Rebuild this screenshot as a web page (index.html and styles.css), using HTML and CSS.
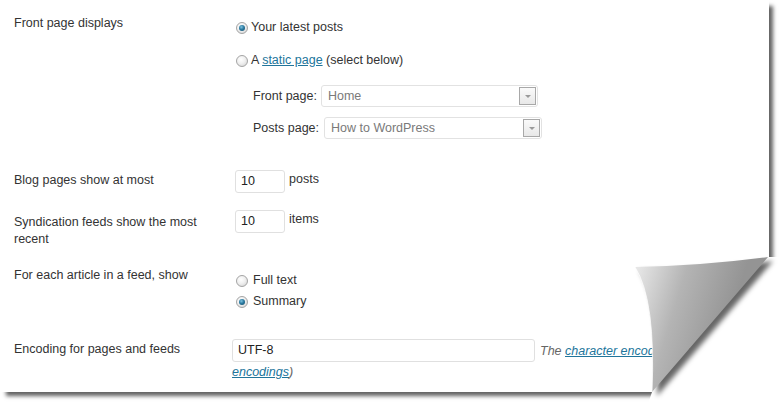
FILE: index.html
```html
<!DOCTYPE html>
<html>
<head>
<meta charset="utf-8">
<link rel="stylesheet" href="styles.css">
</head>
<body>
<div class="sheet">
  <div class="page">
    <div class="row row-front">
      <div class="label">Front page displays</div>
      <div class="field">
        <div class="radio-line first"><span class="radio checked"></span><span class="opt">Your latest posts</span></div>
        <div class="radio-line second"><span class="radio"></span><span class="opt">A <a href="#">static page</a> (select below)</span></div>
        <div class="select-row sel1"><span class="sel-label">Front page:</span><span class="select w1">Home<span class="arrow"></span></span></div>
        <div class="select-row sel2"><span class="sel-label">Posts page:</span><span class="select w2">How to WordPress<span class="arrow"></span></span></div>
      </div>
    </div>
    <div class="row row-blog">
      <div class="label">Blog pages show at most</div>
      <div class="field inline"><span class="input small">10</span><span class="unit">posts</span></div>
    </div>
    <div class="row row-feed">
      <div class="label">Syndication feeds show the most recent</div>
      <div class="field inline"><span class="input small">10</span><span class="unit">items</span></div>
    </div>
    <div class="row row-article">
      <div class="label">For each article in a feed, show</div>
      <div class="field">
        <div class="radio-line r1"><span class="radio"></span><span class="opt">Full text</span></div>
        <div class="radio-line r2"><span class="radio checked"></span><span class="opt">Summary</span></div>
      </div>
    </div>
    <div class="row row-enc">
      <div class="label">Encoding for pages and feeds</div>
      <div class="field enc">
        <div class="enc-line"><span class="input wide">UTF-8</span><span class="desc">The <a href="#">character encoding</a> of your site (</span></div>
        <div class="desc desc2"><a href="#">encodings</a>)</div>
      </div>
    </div>
  </div>
  <svg class="curl" width="184" height="167" viewBox="600 240 184 167">
    <defs>
      <filter id="blur" x="-30%" y="-30%" width="160%" height="160%">
        <feGaussianBlur stdDeviation="2.4"/>
      </filter>
      <linearGradient id="flapg" gradientUnits="userSpaceOnUse" x1="636" y1="275" x2="735" y2="305">
        <stop offset="0" stop-color="#e6e6e6"/>
        <stop offset="0.45" stop-color="#b4b4b4"/>
        <stop offset="1" stop-color="#949494"/>
      </linearGradient>
    </defs>
    <path d="M768,257 L790,257 L790,410 L646,410 L652,392 Z" fill="#ffffff"/>
    <path d="M635,267 Q700,266 768,257 L652,392 Q656,300 635,267 Z" fill="rgba(0,0,0,0.6)" filter="url(#blur)" transform="translate(5,4)"/>
    <path d="M635,267 Q700,266 768,257 L652,392 Q656,300 635,267 Z" fill="url(#flapg)"/>
    <path d="M635,267 Q656,300 652,392" fill="none" stroke="rgba(255,255,255,0.7)" stroke-width="1"/>
  </svg>
</div>
</body>
</html>
```
FILE: styles.css
```css
* { box-sizing: border-box; }
html, body { margin: 0; padding: 0; background: #fff; }
body {
  font-family: "Liberation Sans", Arial, sans-serif;
  font-size: 12.5px;
  color: #333;
}
.sheet { position: relative; width: 784px; height: 407px; overflow: hidden; }
.page {
  width: 769px;
  height: 392px;
  background: #fff;
  box-shadow: 5px 5px 4px -1px rgba(0,0,0,0.62);
  overflow: hidden;
}
a { color: #21759b; text-decoration: underline; }

.row { display: flex; align-items: flex-start; }
.label { width: 235px; padding-left: 14px; line-height: 17px; flex: none; }
.field { flex: 1; }
.field.inline { display: flex; align-items: flex-start; }

.row-front { padding-top: 14px; }
.row-front .label { margin-top: 1px; }
.radio-line { height: 17px; line-height: 17px; display: flex; align-items: center; white-space: nowrap; }
.radio-line.first { margin-top: 5px; }
.radio-line.second { margin-top: 16px; }
.radio {
  width: 12px; height: 12px; border-radius: 50%;
  margin-left: 1px; margin-right: 3px;
  border: 1px solid #a4a4a4;
  background: radial-gradient(circle at 40% 35%, #ffffff 0%, #f0f0f0 45%, #cfcfcf 100%);
  flex: none;
  position: relative;
}
.radio.checked::after {
  content: "";
  position: absolute; left: 2px; top: 2px; width: 6px; height: 6px; border-radius: 50%;
  background: radial-gradient(circle at 40% 35%, #7fc3e0 0%, #2b7aa0 45%, #154a66 100%);
}
.r1 .radio, .r2 .radio { margin-right: 5px; }
.select-row { display: flex; align-items: center; height: 22px; padding-left: 18px; }
.sel1 { margin-top: 16px; }
.sel2 { margin-top: 10px; }
.sel-label { margin-right: 5px; }
.sel1 .sel-label { margin-right: 4px; }
.select {
  position: relative; height: 22px; line-height: 20px;
  border: 1px solid #e2e2e2; border-radius: 3px; background: #fff;
  color: #7a7a7a; padding-left: 6px;
}
.w1 { width: 217px; }
.w2 { width: 218px; }
.arrow {
  position: absolute; right: 1px; top: 1px; width: 17px; height: 18px;
  border: 1px solid #a8a8a8;
  background: linear-gradient(#fafafa, #e8e8e8);
}
.arrow::after {
  content: ""; position: absolute; left: 5px; top: 7px;
  border-left: 3px solid transparent; border-right: 3px solid transparent;
  border-top: 3px solid #9a9a9a;
}

.input {
  display: inline-block; height: 23px; line-height: 21px;
  border: 1px solid #e0e0e0; border-radius: 3px; background: #fff;
  color: #222; padding-left: 5px;
}
.input.small { width: 50px; }
.unit { margin-left: 4px; line-height: 17px; margin-top: 1px; }

.row-blog { margin-top: 31px; }
.row-blog .label { margin-top: 2px; }
.row-feed { margin-top: 17px; }
.row-feed .label { margin-top: 4px; padding-right: 30px; }
.row-article { margin-top: 16px; }
.row-article .label { margin-top: 3px; }
.radio-line.r1 { margin-top: 8px; }
.radio-line.r2 { margin-top: 4px; }

.row-enc { margin-top: 29px; }
.row-enc .label { margin-top: 2px; }
.field.enc { margin-left: -3px; }
.enc-line { display: flex; align-items: center; white-space: nowrap; }
.input.wide { width: 303px; flex: none; }
.desc { font-style: italic; color: #666; margin-left: 5px; }
.desc2 { margin-left: 0; line-height: 17px; margin-top: 2px; }
.curl { position: absolute; left: 600px; top: 240px; }
```
